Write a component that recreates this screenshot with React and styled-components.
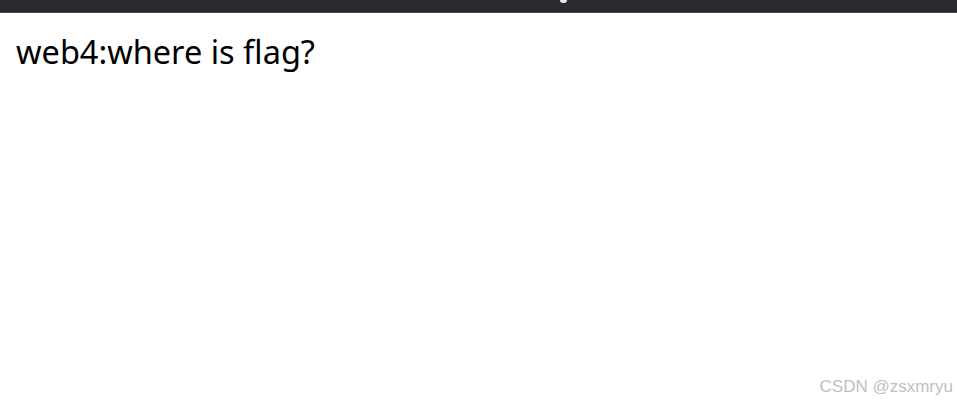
import React from "react";
import styled, { createGlobalStyle } from "styled-components";

const Global = createGlobalStyle`
  html, body { margin: 0; padding: 0; background: #fff; }
  body { width: 957px; height: 405px; overflow: hidden; }
`;

const Page = styled.div`
  position: relative;
  width: 957px;
  height: 405px;
  background: #ffffff;
  display: flex;
  flex-direction: column;
`;

const TopBar = styled.div`
  height: 12px;
  background: #2a2831;
  border-bottom: 1px solid #4a4850;
  position: relative;
  flex: none;
`;

const BarGlyph = styled.span`
  position: absolute;
  left: 560px;
  top: 0;
  width: 7px;
  height: 3px;
  background: #e8e8ea;
  border-radius: 0 0 3px 3px;
`;

const Content = styled.div`
  padding: 17px 16px;
`;

const Heading = styled.div`
  font-family: "Noto Sans", "Open Sans", sans-serif;
  font-size: 32.5px;
  line-height: 44px;
  color: #000;
`;

const Watermark = styled.div`
  position: absolute;
  right: 4px;
  bottom: 8px;
  font-family: "Liberation Sans", Arial, sans-serif;
  font-size: 17px;
  color: #c0c0c0;
`;

export default function App() {
  return (
    <>
      <Global />
      <Page>
        <TopBar>
          <BarGlyph />
        </TopBar>
        <Content>
          <Heading>web4:where is flag?</Heading>
        </Content>
        <Watermark>CSDN @zsxmryu</Watermark>
      </Page>
    </>
  );
}
